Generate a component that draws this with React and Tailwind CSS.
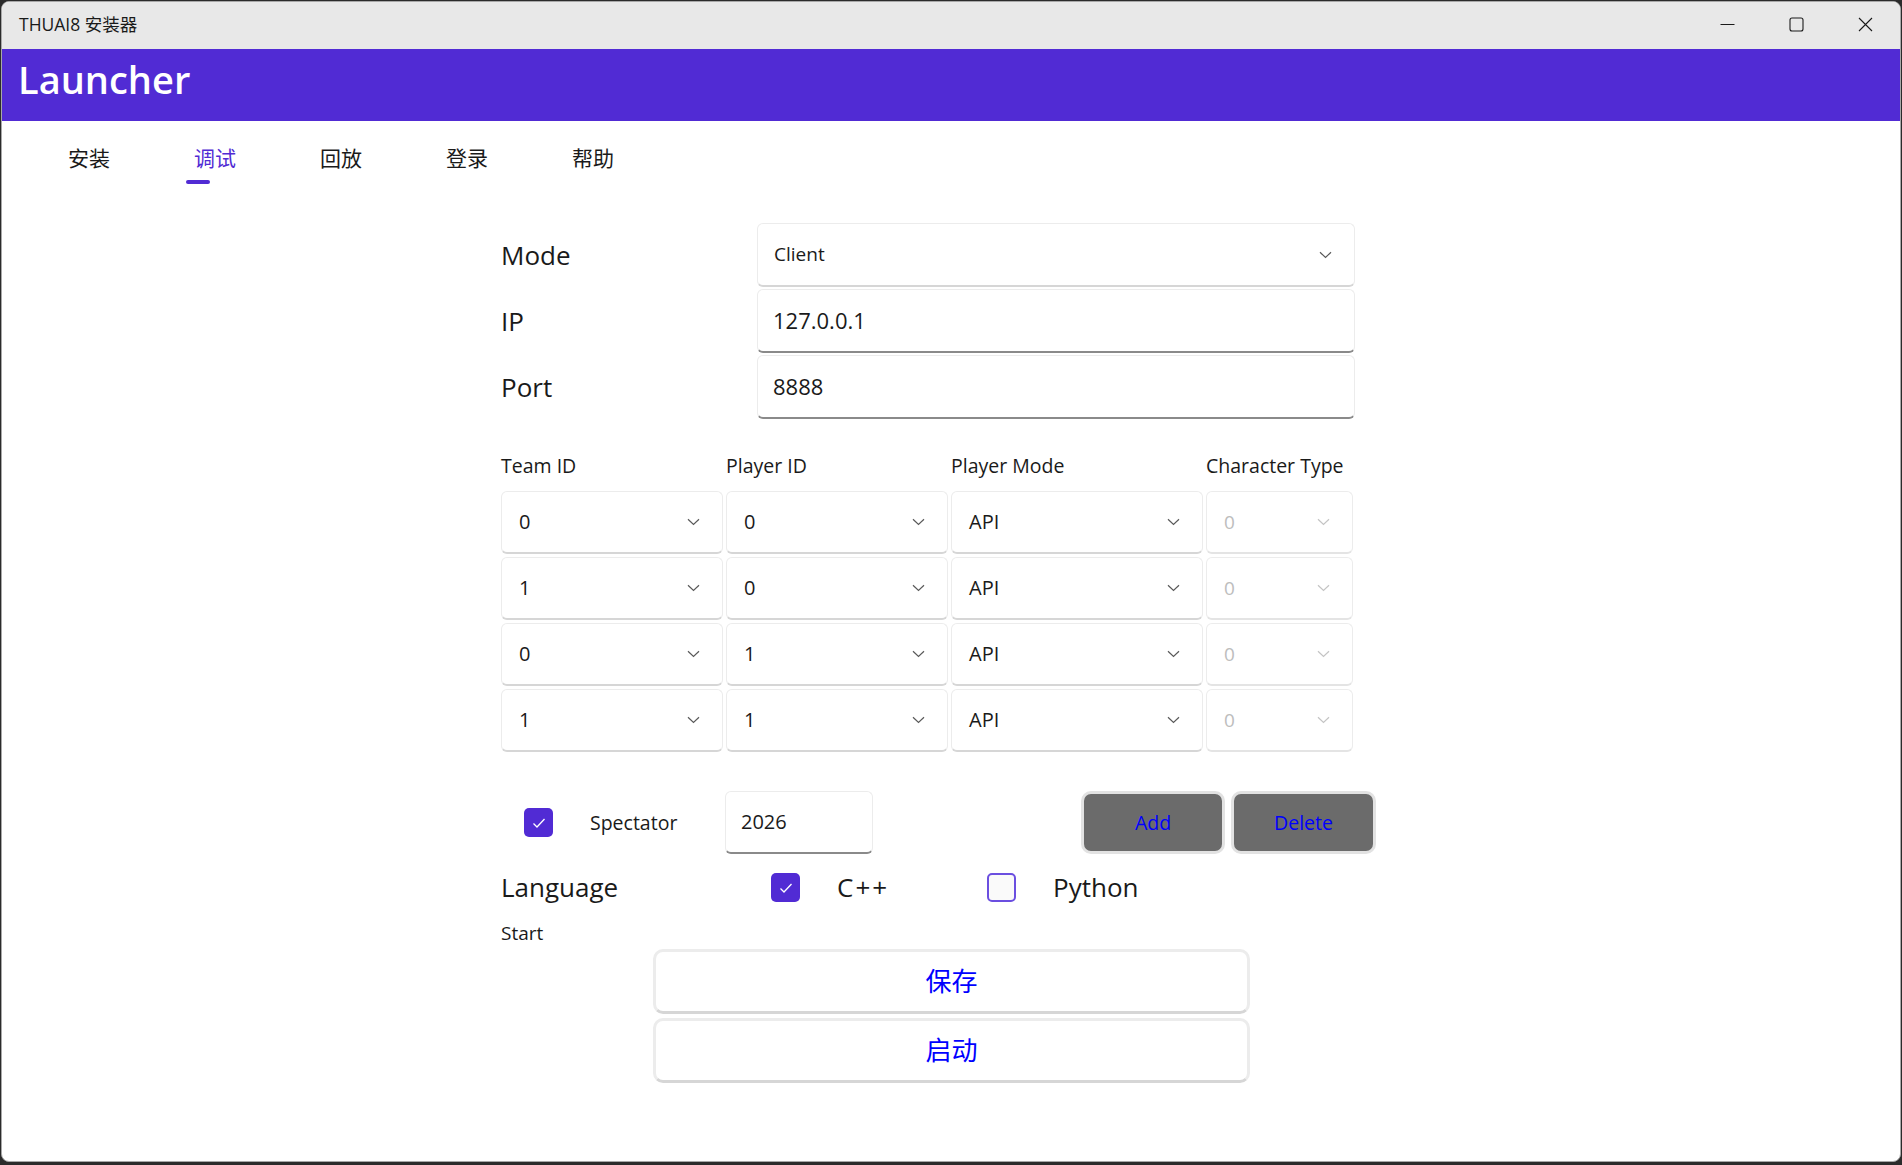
import React from "react";

const FONT = { fontFamily: '"Open Sans", "Noto Sans CJK SC", sans-serif' };

const TABS = ["安装", "调试", "回放", "登录", "帮助"];

const ROWS = [
  ["0", "0", "API", "0"],
  ["1", "0", "API", "0"],
  ["0", "1", "API", "0"],
  ["1", "1", "API", "0"],
];

function Chevron({ muted }) {
  return (
    <svg width="13" height="8" viewBox="0 0 13 8" fill="none">
      <path
        d="M1 1.2 L6.5 6.5 L12 1.2"
        stroke={muted ? "#c4c4c4" : "#5a5a5a"}
        strokeWidth="1.2"
      />
    </svg>
  );
}

function Check() {
  return (
    <svg width="14" height="12" viewBox="0 0 14 12" fill="none">
      <path d="M1.5 6.5 L5 10 L12.5 2" stroke="white" strokeWidth="1.3" />
    </svg>
  );
}

function CheckBox({ checked }) {
  return checked ? (
    <div className="flex h-[29px] w-[29px] items-center justify-center rounded-[5px] bg-[#512bd4]">
      <Check />
    </div>
  ) : (
    <div className="h-[29px] w-[29px] rounded-[5px] border-2 border-[#6b4fe0] bg-[#fafafa]" />
  );
}

function Picker({ value, width, muted, small }) {
  return (
    <div
      className={`flex h-[63px] shrink-0 items-center justify-between rounded-[6px] border border-[#ececec] border-b-2 bg-white pl-[17px] pr-[22px] ${
        muted ? "border-b-[#e4e4e4]" : "border-b-[#d6d6d6]"
      }`}
      style={{ width }}
    >
      <span
        className={`${small ? "text-[19px]" : "text-[20px]"} ${muted ? "text-[#bdbdbd]" : "text-[#1a1a1a]"}`}
      >
        {value}
      </span>
      <Chevron muted={muted} />
    </div>
  );
}

function Entry({ value, className }) {
  return (
    <div
      className={`flex items-center rounded-[6px] border border-[#ececec] border-b-2 border-b-[#8a8a8a] bg-white pl-[15px] text-[#1a1a1a] ${className}`}
    >
      {value}
    </div>
  );
}

function WindowControls() {
  return (
    <div className="flex items-center">
      <div className="flex w-[69px] justify-center">
        <svg width="15" height="15" viewBox="0 0 15 15">
          <path d="M0.5 7.5 H14.5" stroke="#1a1a1a" strokeWidth="1.1" />
        </svg>
      </div>
      <div className="flex w-[69px] justify-center">
        <svg width="15" height="15" viewBox="0 0 15 15" fill="none">
          <rect x="1" y="1" width="13" height="13" rx="2" stroke="#1a1a1a" strokeWidth="1.1" />
        </svg>
      </div>
      <div className="flex w-[69px] justify-center">
        <svg width="15" height="15" viewBox="0 0 15 15">
          <path d="M1 1 L14 14 M14 1 L1 14" stroke="#1a1a1a" strokeWidth="1.1" />
        </svg>
      </div>
    </div>
  );
}

export default function App() {
  return (
    <div className="h-[1165px] w-[1902px] bg-[#2b2b2b] pb-[3px] pl-px pr-[1px] pt-px" style={FONT}>
      <div className="flex h-full flex-col overflow-hidden rounded-[8px] border border-[#a8a8a8] bg-white">
        {/* title bar */}
        <div className="flex h-[47px] shrink-0 items-center justify-between bg-[#e8e8e8] pb-[2px] pl-[17px]">
          <span className="text-[17.5px] text-[#1a1a1a]">THUAI8 安装器</span>
          <WindowControls />
        </div>

        {/* header */}
        <div className="flex h-[72px] shrink-0 items-center bg-[#512bd4] pb-[12px] pl-[16px]">
          <span className="text-[38px] font-semibold text-white">Launcher</span>
        </div>

        {/* tabs */}
        <div className="flex h-[75px] shrink-0 pl-[24px] pt-[23px]">
          {TABS.map((t, i) => (
            <div key={t} className="w-[126px]">
              <div
                className={`text-center text-[21px] leading-[28px] ${
                  i === 1 ? "text-[#512bd4]" : "text-[#1a1a1a]"
                }`}
              >
                {t}
              </div>
              {i === 1 && <div className="ml-[34px] mt-[8px] h-[4px] w-[24px] rounded-full bg-[#512bd4]" />}
            </div>
          ))}
        </div>

        {/* form */}
        <div className="flex flex-col pl-[499px] pt-[27px]">
          <div className="flex flex-col gap-[2px]">
            <div className="flex items-center">
              <span className="w-[256px] text-[26px] text-[#1a1a1a]">Mode</span>
              <div className="flex h-[64px] w-[598px] items-center justify-between rounded-[6px] border border-[#ececec] border-b-2 border-b-[#d6d6d6] bg-white pl-[16px] pr-[22px]">
                <span className="text-[19px] text-[#1a1a1a]">Client</span>
                <Chevron />
              </div>
            </div>
            <div className="flex items-center">
              <span className="w-[256px] text-[26px] text-[#1a1a1a]">IP</span>
              <Entry value="127.0.0.1" className="h-[64px] w-[598px] text-[22px]" />
            </div>
            <div className="flex items-center">
              <span className="w-[256px] text-[26px] text-[#1a1a1a]">Port</span>
              <Entry value="8888" className="h-[64px] w-[598px] text-[22px]" />
            </div>
          </div>

          {/* player grid */}
          <div className="mt-[35px] flex text-[19.5px] leading-[24px] text-[#1a1a1a]">
            <span className="w-[225px]">Team ID</span>
            <span className="w-[225px]">Player ID</span>
            <span className="w-[255px]">Player Mode</span>
            <span>Character Type</span>
          </div>
          <div className="mt-[13px] flex flex-col gap-[3px]">
            {ROWS.map((r, i) => (
              <div key={i} className="flex gap-[3px]">
                <Picker value={r[0]} width={222} />
                <Picker value={r[1]} width={222} />
                <Picker value={r[2]} width={252} />
                <Picker value={r[3]} width={147} muted small />
              </div>
            ))}
          </div>

          {/* spectator */}
          <div className="mt-[39px] flex h-[63px] items-center">
            <div className="ml-[23px]">
              <CheckBox checked />
            </div>
            <span className="ml-[37px] w-[135px] text-[19.5px] text-[#1a1a1a]">Spectator</span>
            <Entry value="2026" className="h-[63px] w-[148px] text-[20px]" />
            <button className="ml-[208px] h-[63px] w-[144px] rounded-[10px] border-[3px] border-[#e2e2e2] bg-[#6b6b6b] text-[19.5px] text-[#0000ff]">
              Add
            </button>
            <button className="ml-[6px] h-[63px] w-[145px] rounded-[10px] border-[3px] border-[#e2e2e2] bg-[#6b6b6b] text-[19.5px] text-[#0000ff]">
              Delete
            </button>
          </div>

          {/* language */}
          <div className="flex h-[67px] items-center text-[26px] text-[#1a1a1a]">
            <span className="w-[270px]">Language</span>
            <div className="flex w-[216px] items-center">
              <CheckBox checked />
              <span className="ml-[37px] tracking-[2px]">C++</span>
            </div>
            <div className="flex items-center">
              <CheckBox />
              <span className="ml-[37px]">Python</span>
            </div>
          </div>

          <span className="text-[19px] leading-[24px] text-[#1a1a1a]">Start</span>

          <div className="ml-[152px] mt-[4px] flex w-[597px] flex-col gap-[4px]">
            <button className="h-[65px] rounded-[10px] border-[3px] border-[#ececec] border-b-[#d6d6d6] bg-white text-[26px] text-[#0000ff]">
              保存
            </button>
            <button className="h-[65px] rounded-[10px] border-[3px] border-[#ececec] border-b-[#d6d6d6] bg-white text-[26px] text-[#0000ff]">
              启动
            </button>
          </div>
        </div>
      </div>
    </div>
  );
}
